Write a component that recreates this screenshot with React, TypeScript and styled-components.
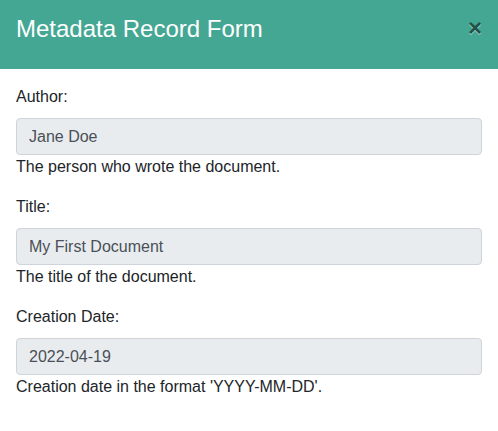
import React from "react";
import styled, { createGlobalStyle } from "styled-components";

const Global = createGlobalStyle`
  * { box-sizing: border-box; }
  html, body { margin: 0; padding: 0; background: #fff; }
  body {
    font-family: "Liberation Sans", Arial, Helvetica, sans-serif;
    font-size: 16px;
    line-height: 1.5;
    color: #212529;
  }
`;

const Modal = styled.div`
  width: 498px;
  background: #fff;
  display: flex;
  flex-direction: column;
`;

const Header = styled.div`
  display: flex;
  align-items: flex-start;
  justify-content: space-between;
  padding: 15px 16px 25px;
  background: #44a793;
  border-bottom: 1px solid #44a793;
`;

const Title = styled.h4`
  margin: 0;
  font-size: 24px;
  font-weight: 500;
  line-height: 28px;
  color: #fff;
`;

const Close = styled.button`
  padding: 16px;
  margin: -15px -16px -16px auto;
  background: transparent;
  border: 0;
  font-family: inherit;
  font-size: 24px;
  font-weight: 700;
  line-height: 1;
  color: #000;
  text-shadow: 0 1px 0 #fff;
  opacity: 0.5;
  cursor: pointer;
`;

const Body = styled.div`
  padding: 16px;
`;

const Group = styled.div`
  margin-bottom: 16px;
`;

const Label = styled.label`
  display: block;
  margin-bottom: 9px;
`;

const Input = styled.input`
  display: block;
  width: 100%;
  height: 37px;
  padding: 6px 12px;
  font-family: inherit;
  font-size: 16px;
  line-height: 1.5;
  color: #495057;
  background: #e9ecef;
  border: 1px solid #ced4da;
  border-radius: 4px;
  outline: none;
`;

const Help = styled.div``;

const fields = [
  { id: "author", label: "Author:", value: "Jane Doe", help: "The person who wrote the document." },
  { id: "title", label: "Title:", value: "My First Document", help: "The title of the document." },
  { id: "date", label: "Creation Date:", value: "2022-04-19", help: "Creation date in the format 'YYYY-MM-DD'." },
];

export default function App() {
  return (
    <>
      <Global />
      <Modal>
        <Header>
          <Title>Metadata Record Form</Title>
          <Close aria-label="Close">×</Close>
        </Header>
        <Body>
          {fields.map((f) => (
            <Group key={f.id}>
              <Label htmlFor={f.id}>{f.label}</Label>
              <Input id={f.id} value={f.value} readOnly />
              <Help>{f.help}</Help>
            </Group>
          ))}
        </Body>
      </Modal>
    </>
  );
}
